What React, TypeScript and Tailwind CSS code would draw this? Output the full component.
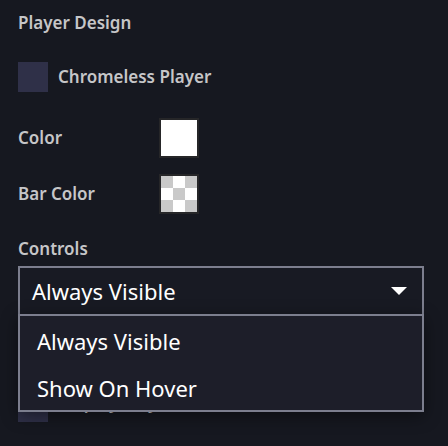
import { useState } from "react";

const options = ["Always Visible", "Show On Hover"];

function Swatch({ checker }: { checker?: boolean }) {
  return (
    <div className="h-10 w-10 border-2 border-[#262628] bg-white">
      {checker && (
        <div className="grid h-full w-full grid-cols-3 grid-rows-3">
          {[0, 1, 2, 3, 4, 5, 6, 7, 8].map((i) => (
            <div
              key={i}
              className={i % 2 === 0 ? "bg-[#c9c9c9]" : "bg-white"}
            />
          ))}
        </div>
      )}
    </div>
  );
}

export default function App() {
  const [value] = useState(options[0]);

  return (
    <div
      className="h-[446px] w-[448px] overflow-hidden bg-[#161820] pl-[18px] pr-[24px] text-[#c6c6c8]"
      style={{ fontFamily: '"Noto Sans", "Open Sans", sans-serif' }}
    >
      {/* Heading */}
      <h2 className="pt-[11px] text-[17px] font-semibold leading-[24px]">
        Player Design
      </h2>

      {/* Chromeless checkbox */}
      <div className="mt-[27px] flex items-center gap-[10px]">
        <div className="h-[30px] w-[30px] bg-[#2f3048]" />
        <span className="text-[17px] font-semibold">Chromeless Player</span>
      </div>

      {/* Colors */}
      <div className="mt-[26px] flex items-center">
        <span className="w-[141px] text-[17px] font-semibold">Color</span>
        <Swatch />
      </div>
      <div className="mt-[16px] flex items-center">
        <span className="w-[141px] text-[17px] font-semibold">Bar Color</span>
        <Swatch checker />
      </div>

      {/* Controls */}
      <div className="mt-[23px] text-[17px] font-semibold leading-[24px]">
        Controls
      </div>

      <div className="relative mt-[5px]">
        <div className="flex h-[50px] items-center justify-between border-2 border-[#7c7e8e] bg-[#181a23] pl-[12px] pr-[15px]">
          <span className="text-[22px] text-white">{value}</span>
          <svg width="16" height="8" viewBox="0 0 16 8">
            <path d="M0 0 L16 0 L8 8 Z" fill="#ffffff" />
          </svg>
        </div>

        {/* Open menu */}
        <div className="absolute left-0 right-0 top-[48px] z-10 border-2 border-[#7c7e8e] bg-[#1d1e29] shadow-[0_4px_16px_rgba(0,0,0,0.45)]">
          {options.map((o) => (
            <div
              key={o}
              className="flex h-[47px] items-center pl-[17px] pt-[3px] text-[22px] text-white"
            >
              {o}
            </div>
          ))}
        </div>

        {/* Row hidden behind the menu */}
        <div className="mt-[76px] flex items-center gap-[10px]">
          <div className="h-[30px] w-[30px] bg-[#2f3048]" />
          <span className="-mt-[8px] text-[17px] font-semibold">
            Display Playlist
          </span>
        </div>
      </div>
    </div>
  );
}
